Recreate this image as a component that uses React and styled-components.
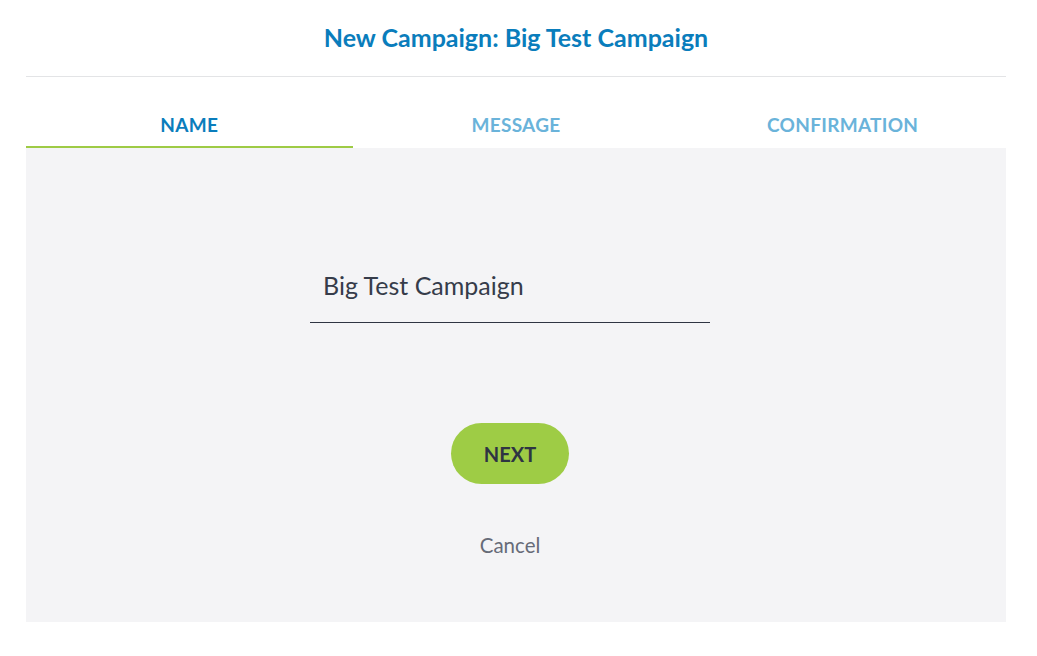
import React, { useState } from "react";
import styled, { createGlobalStyle } from "styled-components";

const GlobalStyle = createGlobalStyle`
  body {
    margin: 0;
    background: #ffffff;
    font-family: Lato, "Open Sans", sans-serif;
  }
`;

const Page = styled.div`
  width: 980px;
  padding-left: 26px;
`;

const Header = styled.div`
  height: 77px;
  box-sizing: border-box;
  padding-bottom: 2px;
  border-bottom: 1px solid #e3e4e6;
  display: flex;
  align-items: center;
  justify-content: center;
`;

const Title = styled.h1`
  margin: 0;
  font-size: 25px;
  font-weight: 700;
  color: #0a7dbc;
`;

const Tabs = styled.div`
  display: grid;
  grid-template-columns: repeat(3, 1fr);
  margin-top: 23px;
`;

const Tab = styled.div`
  height: 48px;
  box-sizing: border-box;
  padding-top: 2px;
  display: flex;
  align-items: center;
  justify-content: center;
  font-size: 19px;
  font-weight: 700;
  letter-spacing: 0.3px;
  color: ${({ active }) => (active ? "#0a7dbc" : "#6ab3da")};
  border-bottom: 2px solid ${({ active }) => (active ? "#9ecb45" : "transparent")};
  cursor: pointer;
`;

const Panel = styled.div`
  background: #f4f4f6;
  height: 474px;
  padding-right: 12px;
  display: flex;
  flex-direction: column;
  align-items: center;
`;

const NameInput = styled.input`
  margin-top: 99px;
  width: 400px;
  height: 76px;
  box-sizing: border-box;
  border: none;
  border-bottom: 1px solid #2f3542;
  background: transparent;
  padding: 0 0 0 13px;
  font-family: Lato, "Open Sans", sans-serif;
  font-size: 25px;
  color: #363c4a;
  outline: none;
`;

const NextButton = styled.button`
  margin-top: 100px;
  width: 118px;
  height: 61px;
  border: none;
  border-radius: 31px;
  background: #9ecc45;
  color: #2e3443;
  font-family: Lato, "Open Sans", sans-serif;
  font-size: 20px;
  font-weight: 700;
  cursor: pointer;
`;

const CancelLink = styled.button`
  margin-top: 49px;
  border: none;
  background: none;
  padding: 0;
  font-family: Lato, "Open Sans", sans-serif;
  font-size: 20.5px;
  color: #666b78;
  cursor: pointer;
`;

const tabs = ["NAME", "MESSAGE", "CONFIRMATION"];

export default function App() {
  const [name, setName] = useState("Big Test Campaign");
  return (
    <>
      <GlobalStyle />
      <Page>
        <Header>
          <Title>New Campaign: Big Test Campaign</Title>
        </Header>
        <Tabs>
          {tabs.map((t, i) => (
            <Tab key={t} active={i === 0}>
              {t}
            </Tab>
          ))}
        </Tabs>
        <Panel>
          <NameInput value={name} onChange={(e) => setName(e.target.value)} />
          <NextButton>NEXT</NextButton>
          <CancelLink>Cancel</CancelLink>
        </Panel>
      </Page>
    </>
  );
}
